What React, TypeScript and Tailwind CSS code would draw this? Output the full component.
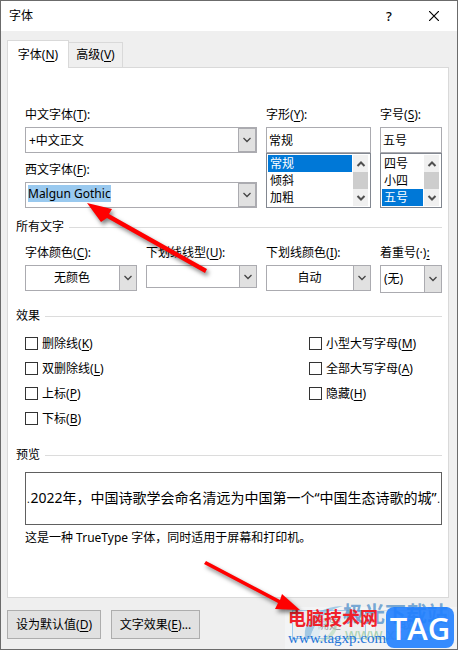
import React from 'react';

interface KeyLabelProps {
  text: string;
  hotkey: string;
  tail?: string;
}

// "字体(N):" style caption with the access key underlined
const KeyLabel: React.FC<KeyLabelProps> = ({ text, hotkey, tail = ')' }) => (
  <>
    {text}(<span className="underline underline-offset-2">{hotkey}</span>
    {tail}
  </>
);

const Chevron: React.FC<{ up?: boolean; bold?: boolean }> = ({ up, bold }) => (
  <svg width="10" height="6" viewBox="0 0 10 6" fill="none" stroke={bold ? '#505050' : '#444'} strokeWidth={bold ? 2 : 1.3}>
    <path d={up ? 'M1.5 5L5 1.5 8.5 5' : 'M1.5 1L5 4.5 8.5 1'} />
  </svg>
);

const arrowBox = 'flex w-[18px] shrink-0 items-center justify-center border border-[#ababb0] bg-[#e1e1e1]';

interface FieldProps {
  id: string;
  label: React.ReactNode;
  children: React.ReactNode;
}

const Field: React.FC<FieldProps> = ({ id, label, children }) => (
  <div className="min-w-0">
    <label htmlFor={id} className="mb-1 block whitespace-nowrap">
      {label}
    </label>
    {children}
  </div>
);

interface ComboProps {
  id: string;
  value: string;
  selected?: boolean;
}

const Combo: React.FC<ComboProps> = ({ id, value, selected }) => (
  <div className="flex h-[26px] border border-[#ababb0] bg-white">
    <div className="flex min-w-0 flex-1 items-start pl-0.5 pt-0.5">
      <input
        id={id}
        type="text"
        defaultValue={value}
        className={selected ? 'h-[17px] field-sizing-content bg-[#99c9ef] outline-none' : 'h-5 w-full pl-px outline-none'}
      />
    </div>
    <button type="button" aria-label="打开列表" className={arrowBox}>
      <Chevron />
    </button>
  </div>
);

interface DropProps {
  id: string;
  value: string;
  className: string;
}

const Drop: React.FC<DropProps> = ({ id, value, className }) => (
  <div className="relative flex">
    <select id={id} defaultValue={value} className={`w-full appearance-none border border-[#ababb0] bg-white pr-[18px] outline-none ${className}`}>
      <option value={value}>{value}</option>
    </select>
    <span className={`pointer-events-none absolute inset-y-0 right-0 ${arrowBox}`}>
      <Chevron />
    </span>
  </div>
);

interface ListProps {
  id: string;
  label: string;
  value: string;
  options: string[];
}

const ListField: React.FC<ListProps> = ({ id, label, value, options }) => (
  <>
    <input id={id} type="text" defaultValue={value} className="block h-[26px] w-full border border-[#ababb0] bg-white px-0.5 outline-none" />
    <div className="flex border border-[#828790] bg-white py-px pl-px pr-0.5">
      <ul role="listbox" aria-label={label} className="mr-px flex-1">
        {options.map((o) => (
          <li
            key={o}
            role="option"
            aria-selected={o === value}
            className={o === value ? 'h-[17px] bg-[#0078d7] pl-0.5 leading-[17px] text-white' : 'h-[17px] pl-0.5 leading-[17px]'}
          >
            {o}
          </li>
        ))}
      </ul>
      <div className="flex w-[15px] flex-col bg-[#f0f0f0]">
        <button type="button" aria-label="向上" className="flex flex-1 items-center justify-center">
          <Chevron up bold />
        </button>
        <div className="flex-1 bg-[#cdcdcd]" />
        <button type="button" aria-label="向下" className="flex flex-1 items-center justify-center">
          <Chevron bold />
        </button>
      </div>
    </div>
  </>
);

const Heading: React.FC<{ children: React.ReactNode }> = ({ children }) => (
  <h2 className="flex items-center gap-[5px]">
    {children}
    <span className="h-px flex-1 bg-[#dcdcdc]" />
  </h2>
);

const Check: React.FC<KeyLabelProps> = ({ text, hotkey }) => (
  <label className="flex h-[25px] items-center gap-1">
    <input type="checkbox" className="size-[13px] appearance-none border border-[#333] bg-white checked:bg-[#0078d7]" />
    <span>
      <KeyLabel text={text} hotkey={hotkey} />
    </span>
  </label>
);

const pushButton = 'h-[29px] border border-[#adadad] bg-[#e1e1e1] text-center whitespace-nowrap';

const App: React.FC = () => {
  return (
    <main className="relative flex min-h-screen flex-col overflow-hidden border border-[#6b6b6b] bg-[#efefef] font-['Noto_Sans','Noto_Sans_CJK_SC',sans-serif] text-[12px] leading-4 text-black">
      <header className="flex h-[30px] items-center bg-white pl-2 pr-[18px]">
        <h1 className="flex-1">字体</h1>
        <button type="button" className="mr-[34px] w-3 text-[13px] font-medium">
          ?
        </button>
        <button type="button" aria-label="关闭">
          <svg width="10" height="10" viewBox="0 0 10 10" stroke="#000" strokeWidth="1.2">
            <path d="M0 0l10 10M10 0L0 10" />
          </svg>
        </button>
      </header>

      <div className="flex flex-1 flex-col pb-[10px] pl-1.5 pr-2 pt-[9px]">
        <div role="tablist" className="flex items-end">
          <button type="button" role="tab" aria-selected="true" className="z-10 -mb-px h-7 w-[62px] border border-b-0 border-[#d9d9d9] bg-white">
            <KeyLabel text="字体" hotkey="N" />
          </button>
          <button type="button" role="tab" aria-selected="false" className="h-[25px] w-[54px] border border-b-0 border-l-0 border-[#d9d9d9]">
            <KeyLabel text="高级" hotkey="V" />
          </button>
        </div>

        <section className="flex-1 border border-[#d9d9d9] bg-white pb-[50px] pl-2 pr-1.5 pt-[39px]">
          <div className="grid grid-cols-[1fr_105px_62px] gap-[9px] pl-[9px]">
            <div className="flex flex-col gap-[9px]">
              <Field id="cn" label={<KeyLabel text="中文字体" hotkey="T" tail="):" />}>
                <Combo id="cn" value="+中文正文" />
              </Field>
              <Field id="west" label={<KeyLabel text="西文字体" hotkey="F" tail="):" />}>
                <Combo id="west" value="Malgun Gothic" selected />
              </Field>
            </div>
            <Field id="style" label={<KeyLabel text="字形" hotkey="Y" tail="):" />}>
              <ListField id="style" label="字形" value="常规" options={['常规', '倾斜', '加粗']} />
            </Field>
            <Field id="size" label={<KeyLabel text="字号" hotkey="S" tail="):" />}>
              <ListField id="size" label="字号" value="五号" options={['四号', '小四', '五号']} />
            </Field>
          </div>

          <div className="mt-[11px]">
            <Heading>所有文字</Heading>
            <div className="mt-[10px] grid grid-cols-[112px_1fr_105px_62px] gap-[9px] pl-[9px]">
              <Field id="color" label={<KeyLabel text="字体颜色" hotkey="C" tail="):" />}>
                <Drop id="color" value="无颜色" className="h-[26px] [text-align-last:center]" />
              </Field>
              <Field id="line" label={<KeyLabel text="下划线线型" hotkey="U" tail="):" />}>
                <Drop id="line" value="" className="h-[23px]" />
              </Field>
              <Field id="linecolor" label={<KeyLabel text="下划线颜色" hotkey="I" tail="):" />}>
                <Drop id="linecolor" value="自动" className="h-[26px] [text-align-last:center]" />
              </Field>
              <Field id="mark" label={<>着重号(·)<span className="underline underline-offset-2">:</span></>}>
                <Drop id="mark" value="(无)" className="h-7 pl-[3px]" />
              </Field>
            </div>
          </div>

          <div className="mt-[15px]">
            <Heading>效果</Heading>
            <div className="mt-[7px] grid grid-cols-[1fr_133px] pl-[9px]">
              <div>
                <Check text="删除线" hotkey="K" />
                <Check text="双删除线" hotkey="L" />
                <Check text="上标" hotkey="P" />
                <Check text="下标" hotkey="B" />
              </div>
              <div>
                <Check text="小型大写字母" hotkey="M" />
                <Check text="全部大写字母" hotkey="A" />
                <Check text="隐藏" hotkey="H" />
              </div>
            </div>
          </div>

          <div className="mt-4">
            <Heading>预览</Heading>
            <div className="ml-[9px] mt-[9px] flex h-[53px] items-center border border-[#606060] px-px">
              <div className="flex flex-1 items-baseline justify-between whitespace-nowrap">
                <span className="text-[10px]">.</span>
                <p className="text-[14px]">2022年，中国诗歌学会命名清远为中国第一个“中国生态诗歌的城”</p>
                <span className="text-[10px]">.</span>
              </div>
            </div>
            <p className="ml-[9px] mt-[5px]">这是一种 TrueType 字体，同时适用于屏幕和打印机。</p>
          </div>
        </section>

        <footer className="mt-3 flex">
          <button type="button" className={`w-[94px] ${pushButton}`}>
            <KeyLabel text="设为默认值" hotkey="D" />
          </button>
          <button type="button" className={`ml-[10px] w-[89px] ${pushButton}`}>
            <KeyLabel text="文字效果" hotkey="E" tail=")..." />
          </button>
          <button type="button" className="ml-auto h-[29px] w-[74px] border border-[#0078d7] bg-[#e1e1e1]">
            确定
          </button>
          <button type="button" className={`ml-[9px] w-[74px] ${pushButton}`}>
            取消
          </button>
        </footer>
      </div>

      {/* site marks over the bottom right corner */}
      <div className="pointer-events-none absolute bottom-0 right-0 h-[42px] w-[172px] bg-[#f4f6f8]/65" />
      <svg className="pointer-events-none absolute bottom-1 right-[112px] opacity-60" width="42" height="40" viewBox="0 0 42 40">
        <path d="M2 33C0 14 15 2 40 1C23 6 11 15 8 34z" fill="#6faedb" />
        <path d="M7 34C10 19 22 9 34 8C23 15 17 22 15 35z" fill="#d5eaf6" />
        <path d="M9 36C22 37 31 27 34 12C37 26 28 40 9 36z" fill="#b5d8b8" />
      </svg>
      <div className="pointer-events-none absolute bottom-1.5 right-[9px] text-right whitespace-nowrap">
        <p className="text-[21px] leading-6 font-bold text-[#4f8fca]/75">极光下载站</p>
        <p className="text-[16px] leading-[18px] text-[#8fc79a]/70">www.xz7.com</p>
      </div>
      <div className="pointer-events-none absolute bottom-px right-[3px] flex items-center gap-1.5">
        <div className="w-[92px] whitespace-nowrap">
          <p className="text-[18px] leading-5 font-bold text-[#f0202a]">电脑技术网</p>
          <p className="font-['Liberation_Serif',serif] text-[15px] leading-5 text-[#2474d8]">www.tagxp.com</p>
        </div>
        <p className="flex h-[41px] w-[68px] items-center justify-center rounded-lg bg-[#2080ff]/90 font-['Open_Sans',sans-serif] text-[31px] font-semibold text-white">
          TAG
        </p>
      </div>

      {/* pointer arrows */}
      <svg className="pointer-events-none absolute left-[79px] top-[194px] drop-shadow-[2px_3px_2px_rgba(0,0,0,0.5)]" width="136" height="86" viewBox="80 195 136 86" fill="red">
        <path d="M87 203L112 209L109 214L207 269L205 273L107 218L101 222z" />
      </svg>
      <svg className="pointer-events-none absolute left-[199px] top-[555px] drop-shadow-[2px_3px_2px_rgba(0,0,0,0.5)]" width="112" height="62" viewBox="200 556 112 62" fill="red">
        <path d="M300 610L282 594L280 600L206 561L204 564L278 603L275 609z" />
      </svg>
    </main>
  );
};

export default App;
